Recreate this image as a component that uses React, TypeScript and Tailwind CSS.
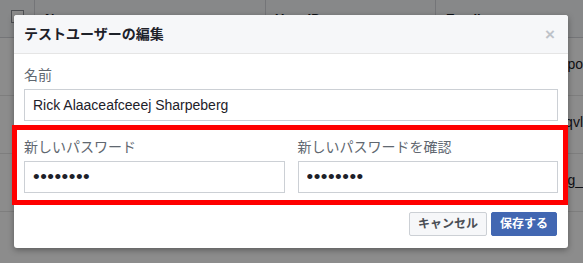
import React from 'react';

const rows = [
  { name: 'Rick Alaaceafceeej Sharpeberg', id: '100012345678901', email: 'rick_npo' },
  { name: 'Mary Alabbhiacfdi Qvlsen', id: '100012345678902', email: 'mary_qvl' },
  { name: 'Dave Alafbfdhcjbg Sharpeberg', id: '100012345678903', email: 'dave_rg_' },
];

const font = { fontFamily: '"Liberation Sans", "Noto Sans CJK JP", sans-serif' };

const Field: React.FC<{ label: string; value: string; password?: boolean }> = ({ label, value, password }) => (
  <div className="flex flex-col">
    <label className="h-[22px] text-[14px] leading-[16px] text-[#606770]">{label}</label>
    <input
      readOnly
      type={password ? 'password' : 'text'}
      value={value}
      className={
        password
          ? 'h-[32px] w-full border border-[#ccd0d5] bg-white px-[8px] text-[19px] tracking-[0.5px] text-[#1d2129] outline-none'
          : 'h-[32px] w-full border border-[#ccd0d5] bg-white px-[8px] text-[14px] text-[#1d2129] outline-none'
      }
      style={font}
    />
  </div>
);

const App: React.FC = () => {
  return (
    <div className="relative h-[263px] w-[583px] overflow-hidden bg-white" style={font}>
      {/* table behind the dialog */}
      <div className="text-[13px] text-[#1d2129]">
        <div className="flex h-[38px] border-b border-[#d3d6db] bg-[#f6f7f9] font-bold">
          <div className="flex w-[35px] justify-center border-r border-[#d3d6db] pt-[10px]">
            <span className="h-[13px] w-[13px] border border-[#90949c] bg-white" />
          </div>
          <div className="w-[231px] border-r border-[#d3d6db] pl-[10px] pt-[9px]">Name</div>
          <div className="w-[170px] border-r border-[#d3d6db] pl-[9px] pt-[9px]">User ID</div>
          <div className="flex-1 pl-[10px] pt-[9px]">Email</div>
        </div>
        {rows.map(r => (
          <div key={r.id} className="flex h-[58px] border-b border-[#e5e5e5]">
            <div className="w-[35px] border-r border-[#e5e5e5]" />
            <div className="w-[231px] border-r border-[#e5e5e5] pl-[10px] pt-[16px] text-[#365899]">{r.name}</div>
            <div className="w-[170px] border-r border-[#e5e5e5] pl-[9px] pt-[16px]">{r.id}</div>
            <div className="flex flex-1 justify-end pt-[16px] text-[14px] text-[#1d2129]">{r.email}</div>
          </div>
        ))}
      </div>

      {/* dim overlay */}
      <div className="absolute inset-0 bg-black/45" />

      {/* dialog */}
      <div className="absolute left-[14px] top-[15px] flex h-[233px] w-[554px] flex-col rounded-[3px] bg-white shadow-[0_2px_6px_rgba(0,0,0,0.35)]">
        <div className="flex h-[39px] items-center justify-between rounded-t-[3px] border-b border-[#e5e5e5] bg-[#f6f7f9] pl-[10px] pr-[13px]">
          <span className="text-[14px] font-bold text-[#1d2129]">テストユーザーの編集</span>
          <span className="text-[17px] font-bold leading-none text-[#bec3c9]">×</span>
        </div>

        <div className="px-[10px] pt-[13px]">
          <Field label="名前" value="Rick Alaaceafceeej Sharpeberg" />

          <div className="-ml-[12px] -mr-[10px] mt-[4px] border-[5px] border-[#ff0000] pb-[7px] pl-[7px] pr-[5px] pt-[9px]">
            <div className="grid grid-cols-2 gap-[13px]">
              <Field label="新しいパスワード" value="abcd1234" password />
              <Field label="新しいパスワードを確認" value="abcd1234" password />
            </div>
          </div>
        </div>

        <div className="mt-auto flex justify-end gap-[4px] pb-[12px] pr-[11px]">
          <button className="h-[24px] w-[78px] rounded-[2px] border border-[#ccd0d5] bg-[#f6f7f9] text-[12px] font-bold text-[#4b4f56]">
            キャンセル
          </button>
          <button className="h-[24px] w-[66px] rounded-[2px] border border-[#4267b2] bg-[#4267b2] text-[12px] font-bold text-white">
            保存する
          </button>
        </div>
      </div>
    </div>
  );
};

export default App;
